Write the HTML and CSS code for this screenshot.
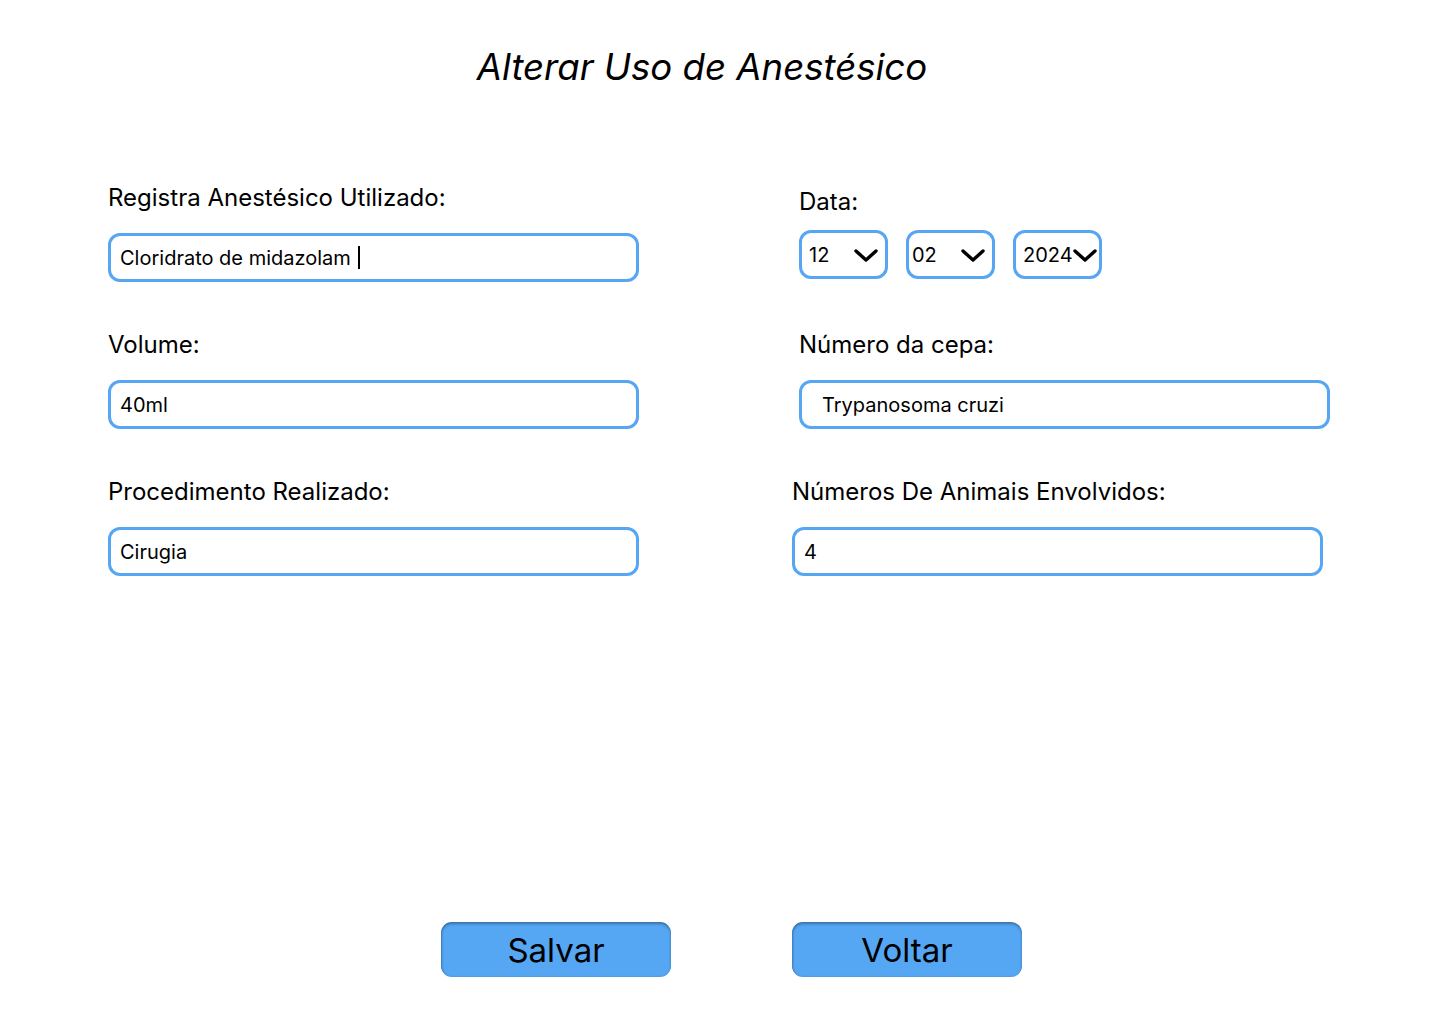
FILE: index.html
```html
<!DOCTYPE html>
<html lang="pt">
<head>
<meta charset="utf-8">
<title>Alterar Uso de Anestésico</title>
<link rel="stylesheet" href="styles.css">
</head>
<body>
<main class="page">
  <h1 class="title">Alterar Uso de Anestésico</h1>

  <form class="form">
    <div class="field">
      <label class="label">Registra Anestésico Utilizado:</label>
      <div class="input"><span>Cloridrato de midazolam</span><span class="caret"></span></div>
    </div>

    <div class="field field-date">
      <label class="label">Data:</label>
      <div class="selects">
        <div class="select"><span>12</span><svg class="chev" viewBox="0 0 24 14"><path d="M2 2 L12 11 L22 2" /></svg></div>
        <div class="select select-02"><span>02</span><svg class="chev" viewBox="0 0 24 14"><path d="M2 2 L12 11 L22 2" /></svg></div>
        <div class="select select-year"><span>2024</span><svg class="chev" viewBox="0 0 24 14"><path d="M2 2 L12 11 L22 2" /></svg></div>
      </div>
    </div>

    <div class="field">
      <label class="label">Volume:</label>
      <div class="input"><span>40ml</span></div>
    </div>

    <div class="field field-indent">
      <label class="label">Número da cepa:</label>
      <div class="input input-wide-pad"><span>Trypanosoma cruzi</span></div>
    </div>

    <div class="field">
      <label class="label">Procedimento Realizado:</label>
      <div class="input"><span>Cirugia</span></div>
    </div>

    <div class="field">
      <label class="label">Números De Animais Envolvidos:</label>
      <div class="input"><span>4</span></div>
    </div>
  </form>

  <div class="actions">
    <button class="btn" type="button">Salvar</button>
    <button class="btn" type="button">Voltar</button>
  </div>
</main>
</body>
</html>
```

FILE: styles.css
```css
* {
  box-sizing: border-box;
}

html, body {
  margin: 0;
  padding: 0;
  background: #ffffff;
}

body {
  font-family: Inter, "Noto Sans", sans-serif;
  color: #000000;
  width: 1440px;
  height: 1024px;
  overflow: hidden;
}

.page {
  padding-top: 45px;
}

.title {
  margin: 0;
  width: 1404px;
  text-align: center;
  font-size: 36.6px;
  line-height: 44px;
  font-style: italic;
  font-weight: 400;
}

.form {
  margin-top: 94px;
  padding-left: 108px;
  display: grid;
  grid-template-columns: 531px 531px;
  column-gap: 153px;
  row-gap: 48px;
}

.field {
  display: flex;
  flex-direction: column;
  height: 99px;
}

.label {
  font-size: 24px;
  line-height: 29px;
  margin-bottom: 21px;
}

.input {
  height: 49px;
  border: 3px solid #56a6f3;
  border-radius: 12px;
  display: flex;
  align-items: center;
  padding-left: 9px;
  font-size: 20px;
  line-height: 24px;
}

.caret {
  display: inline-block;
  width: 2px;
  height: 23px;
  background: #000;
  margin-left: 7px;
}

.field-indent {
  padding-left: 7px;
  margin-right: -7px;
}

.input-wide-pad {
  padding-left: 20px;
}

.field-date {
  padding-left: 7px;
  padding-top: 4px;
}

.field-date .label {
  margin-bottom: 14px;
}

.selects {
  display: flex;
  gap: 18px;
}

.select {
  width: 89px;
  height: 49px;
  border: 3px solid #56a6f3;
  border-radius: 12px;
  display: flex;
  align-items: center;
  padding-left: 7px;
  font-size: 20px;
  line-height: 24px;
}

.select-02 {
  padding-left: 3px;
}

.select-year {
  padding-left: 7px;
}

.chev {
  width: 24px;
  height: 14px;
  fill: none;
  stroke: #000;
  stroke-width: 3.4;
  stroke-linecap: round;
  stroke-linejoin: round;
  margin-left: auto;
  margin-right: 7px;
  margin-top: 3px;
}

.select-year .chev {
  margin-left: 0;
  margin-right: 0;
}

.actions {
  margin-top: 346px;
  padding-left: 441px;
  display: flex;
  gap: 121px;
}

.btn {
  width: 230px;
  height: 55px;
  border: none;
  border-radius: 11px;
  background: #55a6f3;
  box-shadow: inset 0 2px 3px rgba(0, 0, 0, 0.3), inset 1px 0 2px rgba(0, 0, 0, 0.15);
  font-family: Inter, "Noto Sans", sans-serif;
  font-size: 33px;
  line-height: 40px;
  color: #000;
  padding: 0;
  cursor: pointer;
}
```
